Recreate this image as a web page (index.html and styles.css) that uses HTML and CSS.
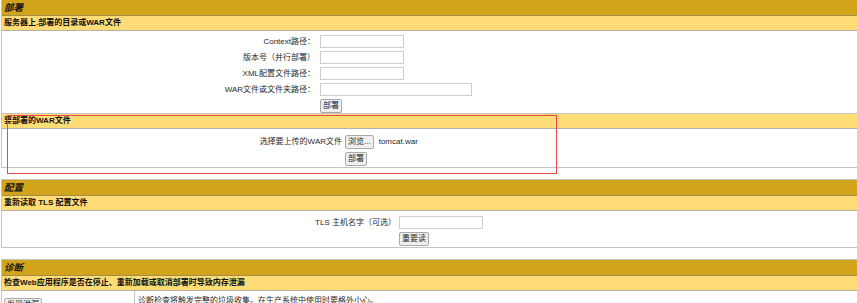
FILE: index.html
```html
<!DOCTYPE html>
<html lang="zh-CN">
<head>
    <meta charset="UTF-8">
    <meta name="viewport" content="width=device-width, initial-scale=1.0">
    <title>Tomcat Web应用程序管理者</title>
    <link rel="stylesheet" href="styles.css">
</head>
<body>
    <div class="page">
        <div class="section">
            <div class="title">部署</div>
            <div class="header">服务器上.部署的目录或WAR文件</div>
            <div class="form form-deploy">
                <span class="label">Context路径：</span>
                <input class="field" type="text">
                <span class="label">版本号（并行部署）</span>
                <input class="field" type="text">
                <span class="label">XML配置文件路径：</span>
                <input class="field" type="text">
                <span class="label">WAR文件或文件夹路径：</span>
                <input class="field field-wide" type="text">
                <span></span>
                <button class="btn">部署</button>
            </div>
            <div class="header">要部署的WAR文件</div>
            <div class="form form-upload">
                <span class="label">选择要上传的WAR文件</span>
                <span class="file">
                    <button class="btn">浏览...</button>
                    <span class="file-name">tomcat.war</span>
                </span>
                <span></span>
                <button class="btn">部署</button>
            </div>
        </div>

        <div class="section">
            <div class="title">配置</div>
            <div class="header">重新读取 TLS 配置文件</div>
            <div class="form form-tls">
                <span class="label">TLS 主机名字（可选）</span>
                <input class="field" type="text">
                <span></span>
                <button class="btn">重要读</button>
            </div>
        </div>

        <div class="section">
            <div class="title">诊断</div>
            <div class="header">检查Web应用程序是否在停止、重新加载或取消部署时导致内存泄漏</div>
            <div class="diag-row">
                <div class="diag-action"><button class="btn">发现泄漏</button></div>
                <div class="diag-text">诊断检查将触发完整的垃圾收集。在生产系统中使用时要格外小心。</div>
            </div>
        </div>

        <div class="mark"></div>
    </div>
</body>
</html>
```

FILE: styles.css
```css
* {
    padding: 0;
    margin: 0;
    box-sizing: border-box;
}

body {
    font-family: "Liberation Sans", "Noto Sans CJK SC", sans-serif;
    color: #2a2a2a;
    background: #fff;
    overflow: hidden;
}

.page {
    position: relative;
    width: 880px;
    margin: -1px 0 0 1px;
}

.section {
    border: 1px solid #c4c4c4;
    margin-bottom: 11px;
}

.title {
    height: 16px;
    padding-left: 2px;
    background: #d2a41c;
    border-bottom: 1px solid #a38d4e;
    color: #111;
    font-size: 9.5px;
    font-weight: bold;
    font-style: italic;
    line-height: 15px;
}

.header {
    height: 15px;
    padding-left: 2px;
    background: #ffdc75;
    border-bottom: 1px solid #b4b0a4;
    color: #111;
    font-size: 8px;
    font-weight: bold;
    line-height: 14px;
}

.form {
    display: grid;
    align-items: center;
    justify-items: start;
}

.form .label {
    justify-self: end;
    font-size: 8px;
    line-height: 13px;
    white-space: nowrap;
}

.form-deploy {
    grid-template-columns: 313px auto;
    column-gap: 5px;
    row-gap: 2.3px;
    height: 83px;
    padding-top: 4px;
    border-bottom: 1px solid #c4c4c4;
}

.form-upload {
    grid-template-columns: 340px auto;
    column-gap: 3px;
    row-gap: 2.5px;
    height: 38px;
    padding-top: 5px;
}

.form-tls {
    grid-template-columns: 394px auto;
    column-gap: 3px;
    row-gap: 2.5px;
    height: 36px;
    padding-top: 4px;
}

.field {
    width: 84px;
    height: 13px;
    border: 1px solid #cdcdcd;
    background: #fff;
}

.field-wide {
    width: 152px;
}

.btn {
    height: 14px;
    padding: 0 2px;
    border: 1px solid #a9a9a9;
    border-radius: 2px;
    background: #efefef;
    color: #2a2a2a;
    font-family: "Liberation Sans", "Noto Sans CJK SC", sans-serif;
    font-size: 8px;
    line-height: 12px;
}

.file {
    display: flex;
    align-items: center;
    gap: 5px;
}

.file-name {
    font-size: 8px;
    line-height: 13px;
}

.diag-row {
    display: flex;
    height: 14px;
}

.diag-action {
    width: 133px;
    padding: 2px 0 0 2px;
    border-right: 1px solid #c4c4c4;
}

.diag-text {
    padding: 3px 0 0 3px;
    font-size: 8px;
    line-height: 13px;
}

.mark {
    position: absolute;
    left: 6px;
    top: 116px;
    width: 550px;
    height: 59px;
    border: 1.5px solid #ec4a4a;
}
```
